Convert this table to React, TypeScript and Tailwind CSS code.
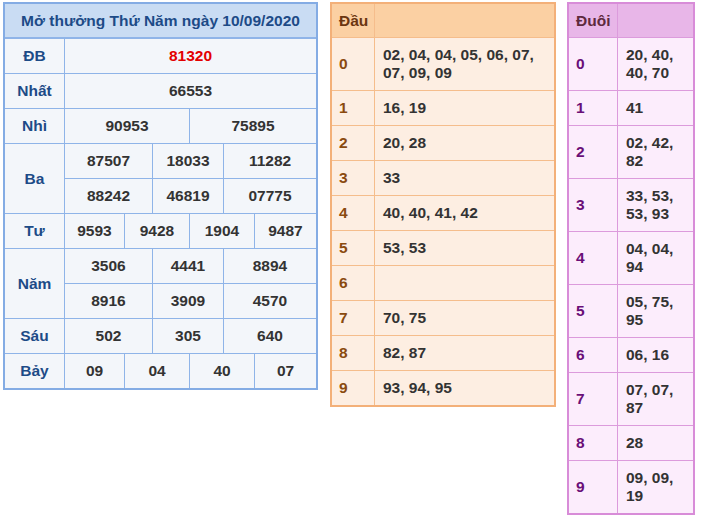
const font = { fontFamily: '"Liberation Sans", Arial, sans-serif' };

type Cell = { text: string; span: string; red?: boolean };

const prizeRows: { label: string; rows: Cell[][] }[] = [
  { label: "ĐB", rows: [[{ text: "81320", span: "col-span-6", red: true }]] },
  { label: "Nhất", rows: [[{ text: "66553", span: "col-span-6" }]] },
  {
    label: "Nhì",
    rows: [
      [
        { text: "90953", span: "col-span-3" },
        { text: "75895", span: "col-span-3" },
      ],
    ],
  },
  {
    label: "Ba",
    rows: [
      [
        { text: "87507", span: "col-span-2" },
        { text: "18033", span: "col-span-2" },
        { text: "11282", span: "col-span-2" },
      ],
      [
        { text: "88242", span: "col-span-2" },
        { text: "46819", span: "col-span-2" },
        { text: "07775", span: "col-span-2" },
      ],
    ],
  },
  {
    label: "Tư",
    rows: [
      [
        { text: "9593", span: "col-span-1" },
        { text: "9428", span: "col-span-2" },
        { text: "1904", span: "col-span-2" },
        { text: "9487", span: "col-span-1" },
      ],
    ],
  },
  {
    label: "Năm",
    rows: [
      [
        { text: "3506", span: "col-span-2" },
        { text: "4441", span: "col-span-2" },
        { text: "8894", span: "col-span-2" },
      ],
      [
        { text: "8916", span: "col-span-2" },
        { text: "3909", span: "col-span-2" },
        { text: "4570", span: "col-span-2" },
      ],
    ],
  },
  {
    label: "Sáu",
    rows: [
      [
        { text: "502", span: "col-span-2" },
        { text: "305", span: "col-span-2" },
        { text: "640", span: "col-span-2" },
      ],
    ],
  },
  {
    label: "Bảy",
    rows: [
      [
        { text: "09", span: "col-span-1" },
        { text: "04", span: "col-span-2" },
        { text: "40", span: "col-span-2" },
        { text: "07", span: "col-span-1" },
      ],
    ],
  },
];

const dau = [
  "02, 04, 04, 05, 06, 07, 07, 09, 09",
  "16, 19",
  "20, 28",
  "33",
  "40, 40, 41, 42",
  "53, 53",
  "",
  "70, 75",
  "82, 87",
  "93, 94, 95",
];

const duoi = [
  "20, 40, 40, 70",
  "41",
  "02, 42, 82",
  "33, 53, 53, 93",
  "04, 04, 94",
  "05, 75, 95",
  "06, 16",
  "07, 07, 87",
  "28",
  "09, 09, 19",
];

function ResultTable() {
  return (
    <div className="w-[315px] border-2 border-[#84ace4] bg-[#8fb4e8]">
      <div className="grid grid-cols-[59px_59px_27px_36px_33px_30px_61px] auto-rows-[34px] gap-px">
        <div className="col-span-7 h-[33px] bg-[#c9dcf3] flex items-center justify-center text-[15.5px] font-bold text-[#1d4b87]">
          Mở thưởng Thứ Năm ngày 10/09/2020
        </div>
        {prizeRows.map((p) => (
          <>
            <div
              key={p.label}
              className={`${p.rows.length === 2 ? "row-span-2" : ""} bg-[#f3f6fa] flex items-center justify-center text-[15.5px] font-bold text-[#1d4b87]`}
            >
              {p.label}
            </div>
            {p.rows.map((r, i) =>
              r.map((c, j) => (
                <div
                  key={p.label + i + "-" + j}
                  className={`${c.span} ${i === 1 && j === 0 ? "col-start-2" : ""} bg-[#f3f6fa] flex items-center justify-center text-[15.5px] font-bold ${c.red ? "text-[#e30000]" : "text-[#333]"}`}
                >
                  {c.text}
                </div>
              ))
            )}
          </>
        ))}
      </div>
    </div>
  );
}

function LotoTable({
  title,
  items,
  theme,
}: {
  title: string;
  items: string[];
  theme: "orange" | "purple";
}) {
  const orange = theme === "orange";
  return (
    <div
      className={
        orange
          ? "w-[226px] border-2 border-[#f3b079] bg-[#f5bd8c]"
          : "w-[128px] border-2 border-[#d88cd8] bg-[#dc9bdc]"
      }
    >
      <div
        className={`grid ${orange ? "grid-cols-[42px_179px]" : "grid-cols-[48px_75px]"} gap-px`}
      >
        <div
          className={`h-[33px] flex items-center px-[7px] text-[15.5px] font-bold ${orange ? "bg-[#fbd0a3] text-[#6b3611]" : "bg-[#e8b6e8] text-[#5e2a3e]"}`}
        >
          {title}
        </div>
        <div className={orange ? "bg-[#fbd0a3]" : "bg-[#e8b6e8]"} />
        {items.map((t, i) => (
          <>
            <div
              key={"l" + i}
              className={`min-h-[34px] flex items-center px-[7px] text-[15.5px] font-bold ${orange ? "bg-[#fdeee2] text-[#8a4a0f]" : "bg-[#fcedfc] text-[#6a0f78]"}`}
            >
              {i}
            </div>
            <div
              key={"v" + i}
              className={`min-h-[34px] flex items-center px-[8px] py-[8px] leading-[18px] text-[15.5px] font-bold text-[#333] ${orange ? "bg-[#fdeee2]" : "bg-[#fcedfc]"}`}
            >
              {t}
            </div>
          </>
        ))}
      </div>
    </div>
  );
}

export default function App() {
  return (
    <div
      className="w-[709px] h-[517px] bg-white flex items-start pt-[2px] pl-[3px]"
      style={font}
    >
      <ResultTable />
      <div className="ml-[12px]">
        <LotoTable title="Đầu" items={dau} theme="orange" />
      </div>
      <div className="ml-[11px]">
        <LotoTable title="Đuôi" items={duoi} theme="purple" />
      </div>
    </div>
  );
}
